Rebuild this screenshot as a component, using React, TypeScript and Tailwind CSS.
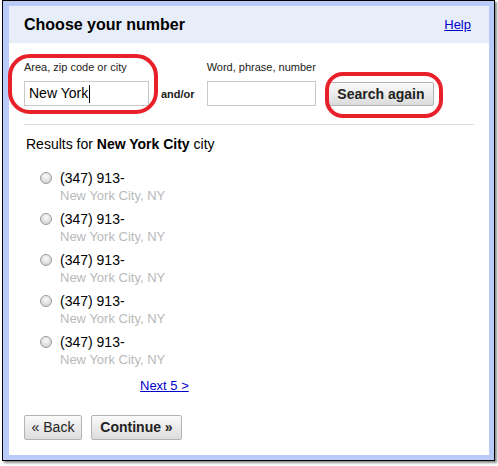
import React from "react";

const items = [1, 2, 3, 4, 5];

function Radio() {
  return (
    <span className="mt-[3px] block h-[12px] w-[12px] shrink-0 rounded-full border border-[#9c9c9c] bg-[radial-gradient(circle_at_50%_35%,#fafafa_0%,#dedede_60%,#c4c4c4_100%)]" />
  );
}

function GrayButton({ children, bold, width }: { children: React.ReactNode; bold?: boolean; width: string }) {
  return (
    <button
      className={`${width} h-[25px] rounded-[2px] border border-[#b4b4b4] bg-[linear-gradient(#fafafa,#e9e9e9_55%,#dcdcdc)] text-[14px] text-[#222] ${bold ? "font-bold" : ""}`}
    >
      {children}
    </button>
  );
}

export default function App() {
  return (
    <div
      className="h-[466px] w-[498px] bg-white"
      style={{ fontFamily: '"Liberation Sans", Arial, sans-serif' }}
    >
      <div className="relative ml-[2px] h-[461px] w-[493px] border border-black shadow-[2px_2px_2px_rgba(0,0,0,0.45)]">
        <div className="flex h-full flex-col border-b-[5px] border-l-[6px] border-r-[5px] border-t-[5px] border-[#bacbfa] bg-white">
          {/* Header */}
          <div className="flex h-[37px] shrink-0 items-center justify-between bg-[#e8eef9] pl-[15px] pr-[18px]">
            <span className="text-[16px] font-bold text-black">Choose your number</span>
            <a href="#" className="text-[13px] text-[#0000cc] underline">
              Help
            </a>
          </div>

          {/* Body */}
          <div className="flex flex-col px-[15px] pt-[18px]">
            <div className="flex items-end">
              <div className="flex flex-col">
                <label className="mb-[7px] text-[11px] leading-[13px] text-[#222]">Area, zip code or city</label>
                <div className="flex h-[25px] w-[125px] items-center border border-[#c8c8c8] pl-[4px] text-[14px] text-black">
                  New York
                  <span className="ml-[1px] h-[18px] w-px bg-black" />
                </div>
              </div>
              <div className="flex h-[25px] items-center px-[12px] pt-[2px] text-[11px] font-bold text-[#222]">and/or</div>
              <div className="flex flex-col">
                <label className="mb-[7px] text-[11px] leading-[13px] text-[#222]">Word, phrase, number</label>
                <div className="h-[25px] w-[109px] border border-[#c8c8c8]" />
              </div>
              <button className="ml-[12px] h-[24px] w-[106px] rounded-[2px] border border-[#b4b4b4] bg-[linear-gradient(#fafafa,#e9e9e9_55%,#dcdcdc)] text-[14px] font-bold text-[#222]">
                Search again
              </button>
            </div>

            <div className="mt-[18px] h-px bg-[#dcdcdc]" />

            <div className="mt-[11px] pl-[2px] text-[14px] leading-[16px] text-black">
              Results for <b>New York City</b> city
            </div>

            <div className="mt-[17px] flex flex-col gap-[5px]">
              {items.map((i) => (
                <div key={i} className="flex h-[36px] items-start pl-[16px]">
                  <Radio />
                  <div className="ml-[8px] flex flex-col text-[13px] leading-[18px]">
                    <span className="text-[14px] text-black">(347) 913-</span>
                    <span className="text-[#b9b9b9]">New York City, NY</span>
                  </div>
                </div>
              ))}
            </div>

            <div className="mt-[9px] pl-[116px] text-[13px] leading-[16px]">
              <a href="#" className="text-[#0000cc] underline">
                Next 5 &gt;
              </a>
            </div>

            <div className="mt-[21px] flex gap-[9px]">
              <GrayButton width="w-[58px]">« Back</GrayButton>
              <GrayButton width="w-[91px]" bold>
                Continue »
              </GrayButton>
            </div>
          </div>
        </div>

        {/* Red annotation marks */}
        <div className="pointer-events-none absolute left-[5px] top-[53px] h-[60px] w-[150px] rounded-[22px] border-[4px] border-[#e8202a]" />
        <div className="pointer-events-none absolute left-[322px] top-[71px] h-[46px] w-[118px] rounded-[18px] border-[4px] border-[#e8202a]" />
      </div>
    </div>
  );
}
